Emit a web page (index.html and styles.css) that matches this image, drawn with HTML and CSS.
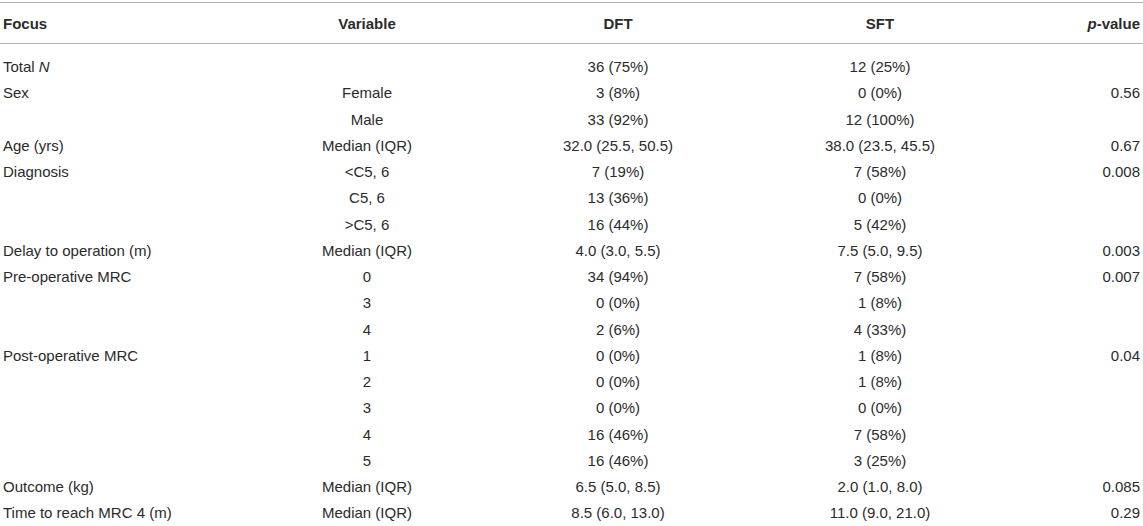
FILE: index.html
```html
<!DOCTYPE html>
<html lang="en">
<head>
    <meta charset="UTF-8">
    <meta name="viewport" content="width=device-width, initial-scale=1.0">
    <title>Patient characteristics: DFT vs SFT</title>
    <link rel="stylesheet" href="styles.css">
</head>
<body>

<table class="data-table">
    <colgroup>
        <col class="col-focus">
        <col class="col-variable">
        <col class="col-dft">
        <col class="col-sft">
        <col class="col-p">
    </colgroup>
    <thead>
        <tr>
            <th class="left">Focus</th>
            <th>Variable</th>
            <th>DFT</th>
            <th>SFT</th>
            <th class="right"><i>p</i>-value</th>
        </tr>
    </thead>
    <tbody>
        <tr>
            <td class="left">Total <i>N</i></td>
            <td></td>
            <td>36 (75%)</td>
            <td>12 (25%)</td>
            <td class="right"></td>
        </tr>
        <tr>
            <td class="left">Sex</td>
            <td>Female</td>
            <td>3 (8%)</td>
            <td>0 (0%)</td>
            <td class="right">0.56</td>
        </tr>
        <tr>
            <td class="left"></td>
            <td>Male</td>
            <td>33 (92%)</td>
            <td>12 (100%)</td>
            <td class="right"></td>
        </tr>
        <tr>
            <td class="left">Age (yrs)</td>
            <td>Median (IQR)</td>
            <td>32.0 (25.5, 50.5)</td>
            <td>38.0 (23.5, 45.5)</td>
            <td class="right">0.67</td>
        </tr>
        <tr>
            <td class="left">Diagnosis</td>
            <td>&lt;C5, 6</td>
            <td>7 (19%)</td>
            <td>7 (58%)</td>
            <td class="right">0.008</td>
        </tr>
        <tr>
            <td class="left"></td>
            <td>C5, 6</td>
            <td>13 (36%)</td>
            <td>0 (0%)</td>
            <td class="right"></td>
        </tr>
        <tr>
            <td class="left"></td>
            <td>&gt;C5, 6</td>
            <td>16 (44%)</td>
            <td>5 (42%)</td>
            <td class="right"></td>
        </tr>
        <tr>
            <td class="left">Delay to operation (m)</td>
            <td>Median (IQR)</td>
            <td>4.0 (3.0, 5.5)</td>
            <td>7.5 (5.0, 9.5)</td>
            <td class="right">0.003</td>
        </tr>
        <tr>
            <td class="left">Pre-operative MRC</td>
            <td>0</td>
            <td>34 (94%)</td>
            <td>7 (58%)</td>
            <td class="right">0.007</td>
        </tr>
        <tr>
            <td class="left"></td>
            <td>3</td>
            <td>0 (0%)</td>
            <td>1 (8%)</td>
            <td class="right"></td>
        </tr>
        <tr>
            <td class="left"></td>
            <td>4</td>
            <td>2 (6%)</td>
            <td>4 (33%)</td>
            <td class="right"></td>
        </tr>
        <tr>
            <td class="left">Post-operative MRC</td>
            <td>1</td>
            <td>0 (0%)</td>
            <td>1 (8%)</td>
            <td class="right">0.04</td>
        </tr>
        <tr>
            <td class="left"></td>
            <td>2</td>
            <td>0 (0%)</td>
            <td>1 (8%)</td>
            <td class="right"></td>
        </tr>
        <tr>
            <td class="left"></td>
            <td>3</td>
            <td>0 (0%)</td>
            <td>0 (0%)</td>
            <td class="right"></td>
        </tr>
        <tr>
            <td class="left"></td>
            <td>4</td>
            <td>16 (46%)</td>
            <td>7 (58%)</td>
            <td class="right"></td>
        </tr>
        <tr>
            <td class="left"></td>
            <td>5</td>
            <td>16 (46%)</td>
            <td>3 (25%)</td>
            <td class="right"></td>
        </tr>
        <tr>
            <td class="left">Outcome (kg)</td>
            <td>Median (IQR)</td>
            <td>6.5 (5.0, 8.5)</td>
            <td>2.0 (1.0, 8.0)</td>
            <td class="right">0.085</td>
        </tr>
        <tr>
            <td class="left">Time to reach MRC 4 (m)</td>
            <td>Median (IQR)</td>
            <td>8.5 (6.0, 13.0)</td>
            <td>11.0 (9.0, 21.0)</td>
            <td class="right">0.29</td>
        </tr>
    </tbody>
</table>

</body>
</html>
```

FILE: styles.css
```css
body {
    margin: 0;
    padding: 0;
    background-color: #fff;
    color: #2b2b2b;
    font-family: "Liberation Sans", Arial, sans-serif;
    font-size: 15px;
}

.data-table {
    width: 1143px;
    table-layout: fixed;
    border-collapse: collapse;
    margin-top: 2px;
}

.col-focus { width: 290px; }
.col-variable { width: 154px; }
.col-dft { width: 348px; }
.col-sft { width: 176px; }
.col-p { width: 175px; }

th, td {
    padding: 0 3px;
    text-align: center;
    white-space: nowrap;
}

th {
    height: 40px;
    font-weight: bold;
    border-top: 1px solid #b0b0b0;
    border-bottom: 1px solid #b0b0b0;
}

td {
    height: 26.25px;
    line-height: 26.25px;
}

tbody tr:first-child td {
    padding-top: 10px;
}

.left {
    text-align: left;
}

.right {
    text-align: right;
}
```
